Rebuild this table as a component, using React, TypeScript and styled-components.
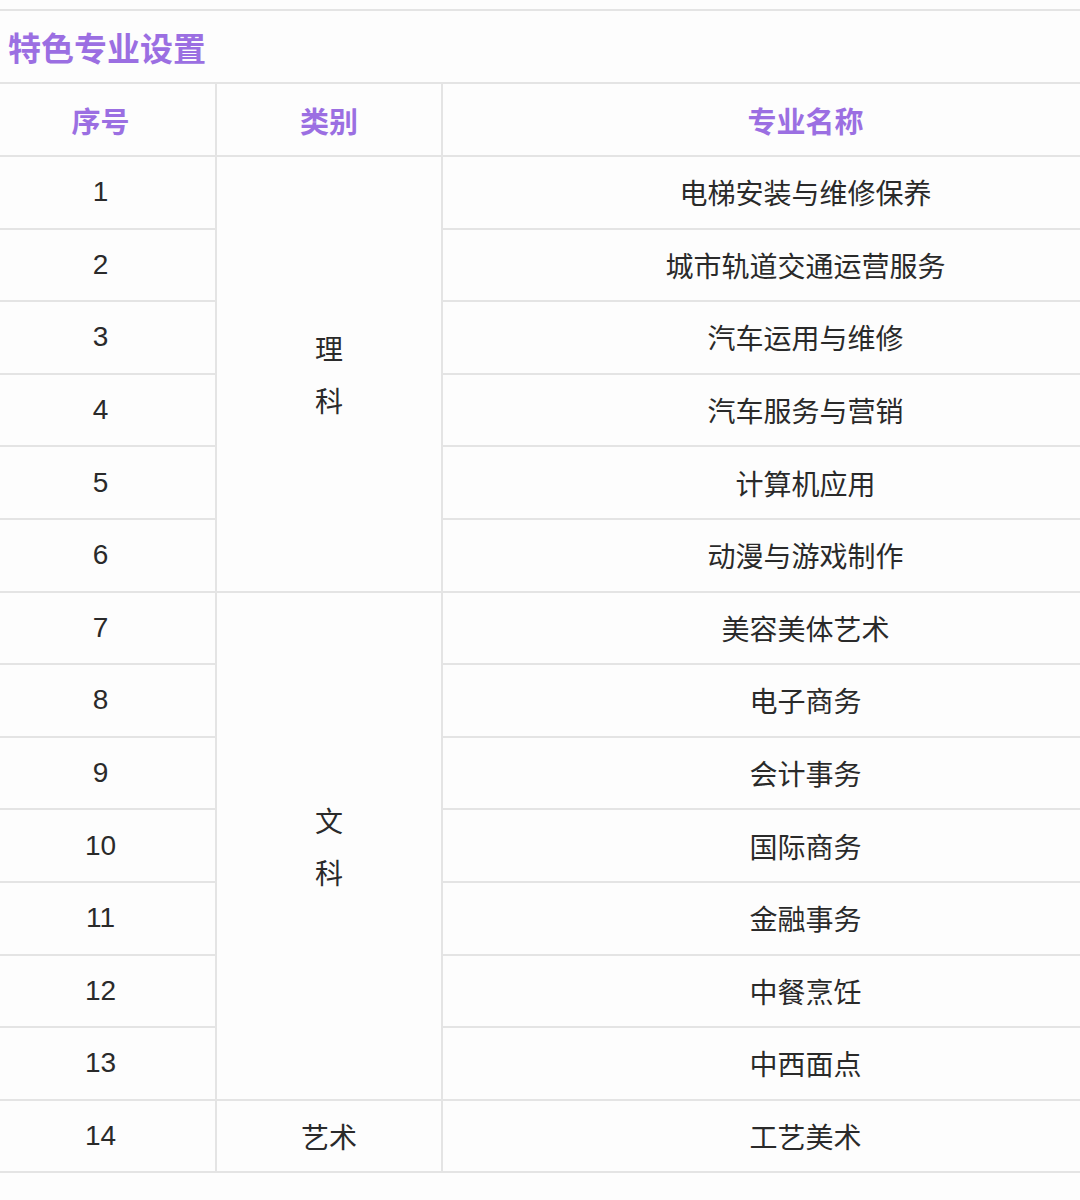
import React from "react";
import styled, { createGlobalStyle } from "styled-components";

const Global = createGlobalStyle`
  html, body { margin: 0; padding: 0; background: #fdfdfd; overflow-x: hidden; }
  body { font-family: "Liberation Sans", "Noto Sans CJK SC", sans-serif; }
`;

const Page = styled.div`
  padding-top: 9px;
  width: 1080px;
  overflow: hidden;
`;

const Section = styled.section`
  border-top: 2px solid #e4e4e4;
`;

const Title = styled.h2`
  margin: 0;
  height: 71px;
  display: flex;
  align-items: center;
  padding-left: 8px;
  font-size: 33px;
  font-weight: 700;
  color: #9b6fe2;
  border-bottom: 2px solid #e4e4e4;
  font-family: "Noto Sans CJK SC", sans-serif;
`;

const Table = styled.table`
  width: 1182px;
  margin-left: -14px;
  border-collapse: collapse;
  table-layout: fixed;
`;

const Col = styled.col<{ $w: number }>`
  width: ${(p) => p.$w}px;
`;

const Th = styled.th`
  height: 71px;
  padding: 0;
  font-size: 29px;
  font-weight: 700;
  color: #9b6fe2;
  font-family: "Noto Sans CJK SC", sans-serif;
  text-align: center;
  border-bottom: 2px solid #e4e4e4;
  border-left: 2px solid #e4e4e4;
  &:first-child { border-left: none; }
`;

const Td = styled.td<{ $cjk?: boolean }>`
  height: 70.6px;
  padding: 0;
  text-align: center;
  vertical-align: middle;
  font-size: 28px;
  color: #2a2a2a;
  font-family: ${(p) =>
    p.$cjk ? `"Noto Sans CJK SC", sans-serif` : `"Liberation Sans", "Noto Sans CJK SC", sans-serif`};
  border-bottom: 2px solid #e4e4e4;
  border-left: 2px solid #e4e4e4;
  &:first-child { border-left: none; }
`;

const Stack = styled.div`
  display: flex;
  flex-direction: column;
  align-items: center;
  line-height: 52px;
`;

type Group = { label: string[]; items: string[] };

const groups: Group[] = [
  {
    label: ["理", "科"],
    items: ["电梯安装与维修保养", "城市轨道交通运营服务", "汽车运用与维修", "汽车服务与营销", "计算机应用", "动漫与游戏制作"],
  },
  {
    label: ["文", "科"],
    items: ["美容美体艺术", "电子商务", "会计事务", "国际商务", "金融事务", "中餐烹饪", "中西面点"],
  },
  { label: ["艺术"], items: ["工艺美术"] },
];

export default function App() {
  let n = 0;
  return (
    <Page>
      <Global />
      <Section>
        <Title>特色专业设置</Title>
        <Table>
          <colgroup>
            <Col $w={230} />
            <Col $w={226} />
            <Col $w={726} />
          </colgroup>
          <thead>
            <tr>
              <Th>序号</Th>
              <Th>类别</Th>
              <Th>专业名称</Th>
            </tr>
          </thead>
          <tbody>
            {groups.map((g) =>
              g.items.map((item, i) => {
                n += 1;
                return (
                  <tr key={item}>
                    <Td>{n}</Td>
                    {i === 0 && (
                      <Td $cjk rowSpan={g.items.length}>
                        <Stack>
                          {g.label.map((l) => (
                            <span key={l}>{l}</span>
                          ))}
                        </Stack>
                      </Td>
                    )}
                    <Td $cjk>{item}</Td>
                  </tr>
                );
              })
            )}
          </tbody>
        </Table>
      </Section>
    </Page>
  );
}
